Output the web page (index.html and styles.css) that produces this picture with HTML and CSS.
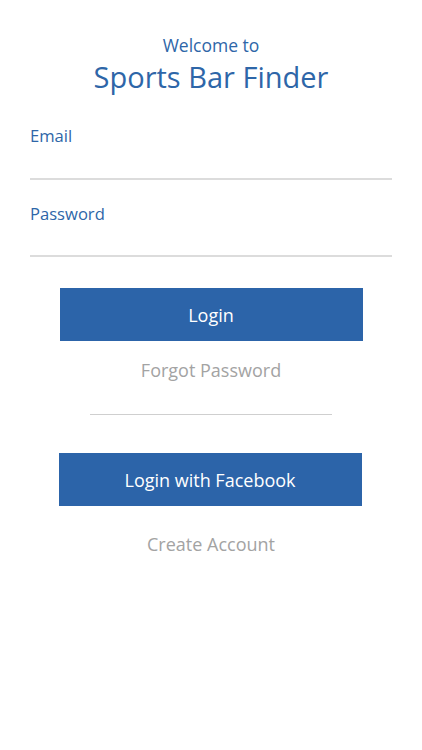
FILE: index.html
```html
<!DOCTYPE html>
<html>
<head>
<meta charset="utf-8">
<link rel="stylesheet" href="styles.css">
</head>
<body>
<div class="screen">
  <header class="header">
    <div class="welcome">Welcome to</div>
    <h1 class="title">Sports Bar Finder</h1>
  </header>
  <form class="form">
    <label class="field">
      <span class="label">Email</span>
      <input class="input" type="email">
    </label>
    <label class="field field-password">
      <span class="label">Password</span>
      <input class="input" type="password">
    </label>
  </form>
  <div class="actions">
    <button class="btn btn-login" type="button">Login</button>
    <a class="link link-forgot">Forgot Password</a>
    <div class="divider"></div>
    <button class="btn btn-fb" type="button">Login with Facebook</button>
    <a class="link link-create">Create Account</a>
  </div>
</div>
</body>
</html>
```
FILE: styles.css
```css
* { box-sizing: border-box; }
html, body { margin: 0; padding: 0; background: #fff; }
body {
  font-family: "Open Sans", "Noto Sans", sans-serif;
  color: #2e66a8;
}
.screen {
  width: 422px;
  height: 750px;
  padding: 0 30px;
  display: flex;
  flex-direction: column;
}
.header {
  padding-top: 34px;
  text-align: center;
}
.welcome {
  font-size: 17.5px;
  line-height: 22px;
}
.title {
  margin: 3px 0 0;
  font-size: 29px;
  font-weight: 400;
  line-height: 36px;
}
.form {
  margin: 30px 0 0;
  display: flex;
  flex-direction: column;
}
.field {
  display: flex;
  flex-direction: column;
}
.field-password { margin-top: 23px; }
.label {
  font-size: 16.6px;
  line-height: 22px;
}
.input {
  border: 0;
  border-bottom: 2px solid #dcdcdc;
  height: 33px;
  padding: 0;
  outline: none;
  font: inherit;
  background: transparent;
}
.field-password .input { height: 32px; }
.actions {
  display: flex;
  flex-direction: column;
  align-items: center;
}
.btn {
  width: 303px;
  height: 53px;
  border: 0;
  background: #2c64a9;
  color: #fff;
  font-family: inherit;
  font-size: 18px;
  padding: 0;
}
.btn-login { margin-top: 31px; }
.btn-fb { margin-top: 38px; margin-left: -2px; }
.link {
  color: #a3a3a3;
  font-size: 18px;
  line-height: 22px;
}
.link-forgot { margin-top: 18px; }
.link-create { margin-top: 27px; }
.divider {
  width: 242px;
  height: 1px;
  background: #cfcfcf;
  margin-top: 33px;
}
```
